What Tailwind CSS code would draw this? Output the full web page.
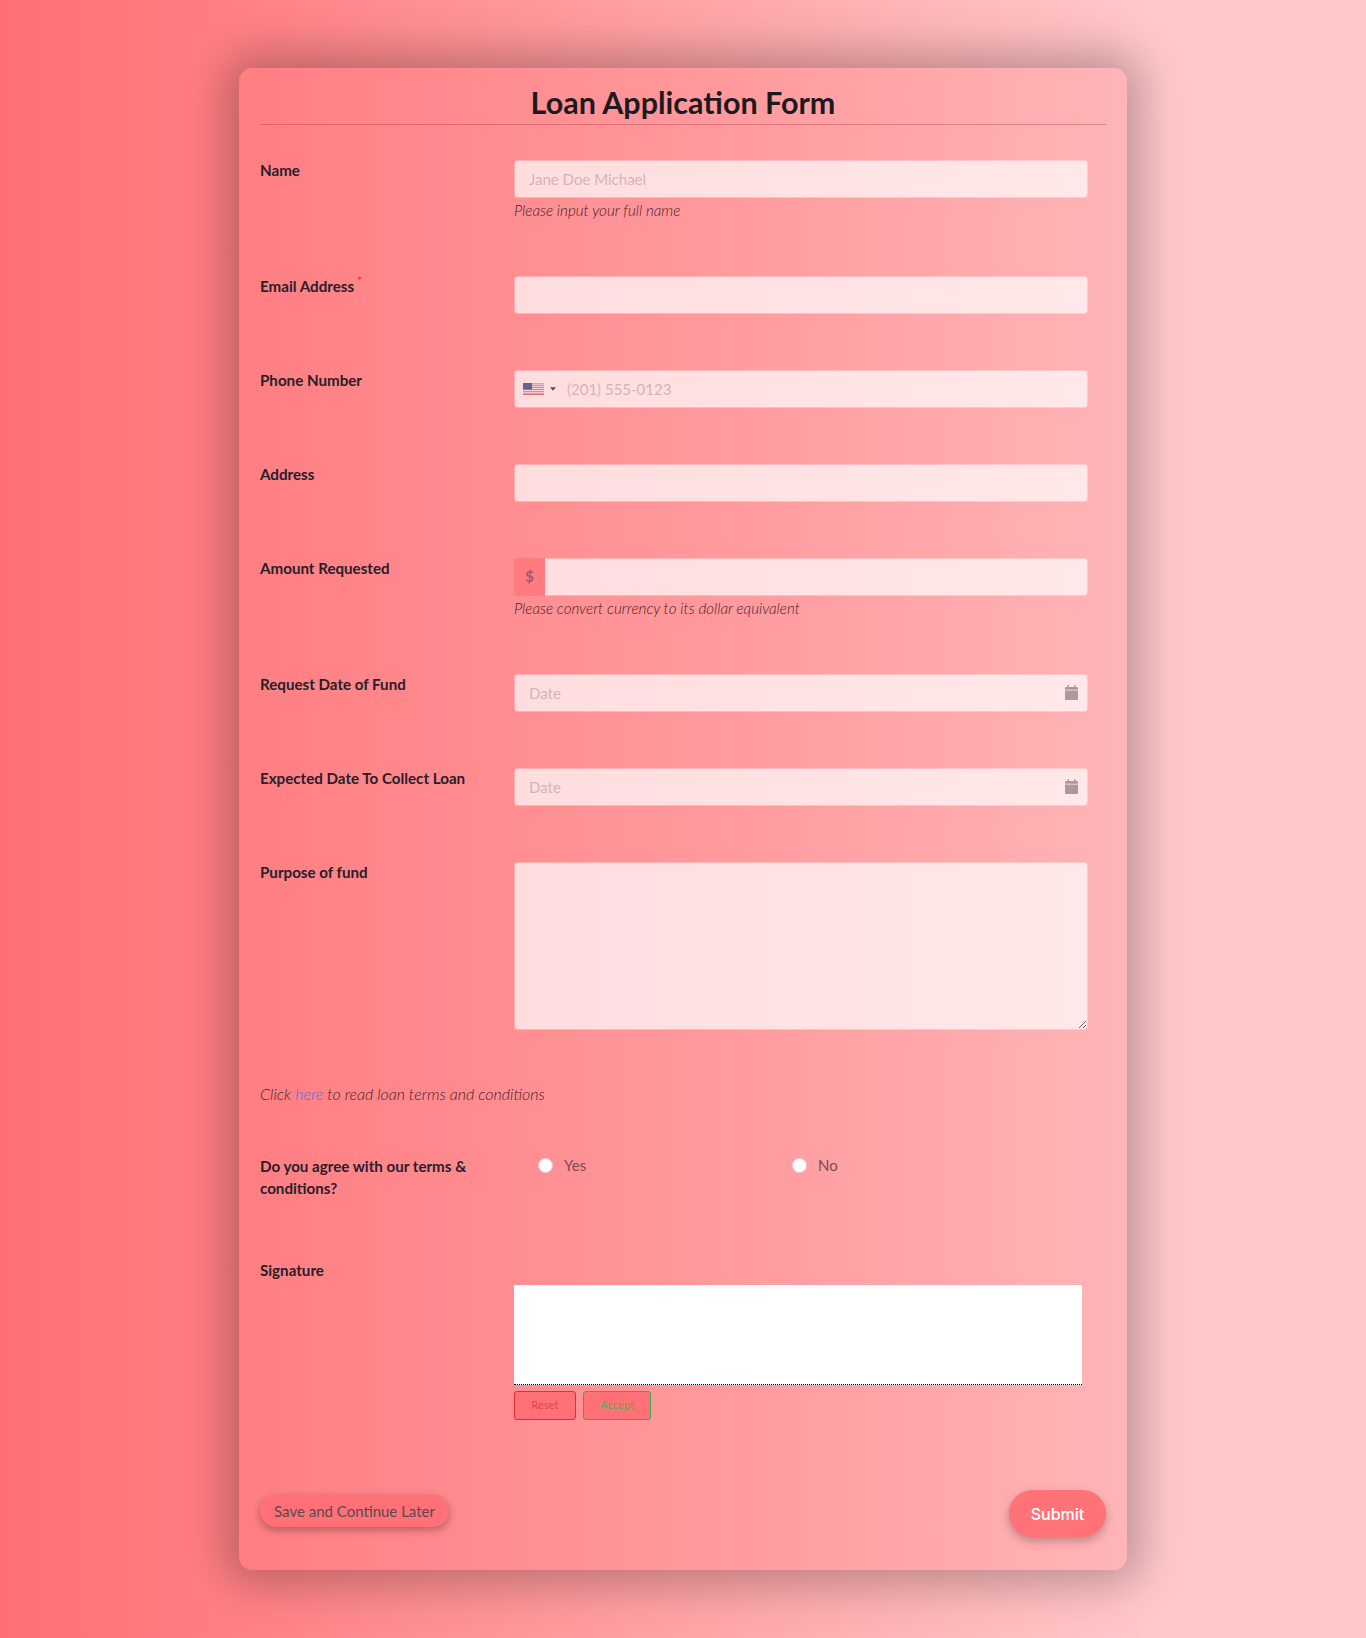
<!DOCTYPE html>
<html lang="en">
<head>
<meta charset="utf-8">
<title>Loan Application Form</title>
<script src="https://cdn.jsdelivr.net/npm/@tailwindcss/browser@4"></script>
</head>
<body class="bg-[linear-gradient(90deg,#ff6e72_0%,#ffc9cb_85%,#ffc9ca_100%)] font-['Lato',sans-serif]">
<div class="flex justify-center pt-[68px] pb-[68px] min-h-[1638px]">
<form class="w-[888px] h-[1502px] rounded-[14px] px-[21px] bg-[linear-gradient(90deg,#ff7e82_0%,#ff9a9e_55%,#ffb5b8_100%)] shadow-[0_0_45px_14px_rgba(0,0,0,0.26)]">
  <div class="h-[57px] border-b border-[#b83a44]/40 flex items-center justify-center">
    <h1 class="text-[30.5px] font-bold text-[#1c1a1f] pt-[12px] leading-[34px]">Loan Application Form</h1>
  </div>

  <div class="flex mt-[35px]">
    <label class="w-[254px] -mt-px text-[15.15px] leading-[22px] font-bold text-[#26202a]">Name</label>
    <div class="w-[574px] mb-[56px]">
      <input class="block w-full h-[38px] rounded-[4px] border border-white/30 bg-white/70 bg-clip-padding px-[14px] text-[15px] placeholder:text-[#d5b3b8]" placeholder="Jane Doe Michael">
      <p class="h-[22px] leading-[25px] text-[15.2px] font-light italic text-[#4a1f28]">Please input your full name</p>
    </div>
  </div>

  <div class="flex">
    <label class="w-[254px] -mt-px text-[15.15px] leading-[22px] font-bold text-[#26202a]">Email Address<sup class="text-[#e5383f] text-[13px] ml-[3px] font-normal">*</sup></label>
    <div class="w-[574px] mb-[56px]">
      <input class="block w-full h-[38px] rounded-[4px] border border-white/30 bg-white/70 bg-clip-padding px-[14px] text-[15px]">
    </div>
  </div>

  <div class="flex">
    <label class="w-[254px] -mt-px text-[15.15px] leading-[22px] font-bold text-[#26202a]">Phone Number</label>
    <div class="w-[574px] mb-[56px] h-[38px] rounded-[4px] border border-white/30 bg-white/70 bg-clip-padding flex items-center pl-[8px]">
      <svg class="w-[21px] h-[12px] shrink-0 opacity-70" viewBox="0 0 21 12">
        <rect width="21" height="12" fill="#fff"/>
        <path d="M0 0.9h21M0 2.75h21M0 4.6h21M0 6.45h21M0 8.3h21M0 10.15h21M0 11.5h21" stroke="#c8343f" stroke-width="0.95"/>
        <rect width="9" height="6.5" fill="#2b2f70"/>
      </svg>
      <svg class="w-[6px] h-[4px] ml-[6px] shrink-0" viewBox="0 0 7 4"><path d="M0 0h7L3.5 4z" fill="#5c4a4e"/></svg>
      <input class="flex-1 h-full ml-[11px] pr-[14px] bg-transparent text-[15px] placeholder:text-[#d5b3b8]" placeholder="(201) 555-0123">
    </div>
  </div>

  <div class="flex">
    <label class="w-[254px] -mt-px text-[15.15px] leading-[22px] font-bold text-[#26202a]">Address</label>
    <div class="w-[574px] mb-[56px]">
      <input class="block w-full h-[38px] rounded-[4px] border border-white/30 bg-white/70 bg-clip-padding px-[14px] text-[15px]">
    </div>
  </div>

  <div class="flex">
    <label class="w-[254px] -mt-px text-[15.15px] leading-[22px] font-bold text-[#26202a]">Amount Requested</label>
    <div class="w-[574px] mb-[56px]">
      <div class="flex h-[38px] rounded-[4px] overflow-hidden">
        <span class="w-[31px] pb-[2px] bg-[#ff7b80] flex items-center justify-center text-[15px] font-bold text-[#a85a62]">$</span>
        <input class="flex-1 border border-white/30 border-l-0 rounded-r-[4px] bg-white/70 bg-clip-padding px-[14px] text-[15px]">
      </div>
      <p class="h-[22px] leading-[25px] text-[15.2px] font-light italic text-[#4a1f28]">Please convert currency to its dollar equivalent</p>
    </div>
  </div>

  <div class="flex">
    <label class="w-[254px] -mt-px text-[15.15px] leading-[22px] font-bold text-[#26202a]">Request Date of Fund</label>
    <div class="w-[574px] mb-[56px] h-[38px] rounded-[4px] border border-white/30 bg-white/70 bg-clip-padding flex items-center pr-[9px]">
      <input class="flex-1 h-full px-[14px] bg-transparent text-[15px] placeholder:text-[#d5b3b8]" placeholder="Date">
      <svg class="w-[13px] h-[15px] -mt-px" viewBox="0 0 13 15" fill="#ad999d"><path d="M2.5 0h1.4v2h5.2V0h1.4v2H12a1 1 0 0 1 1 1v1.8H0V3a1 1 0 0 1 1-1h1.5z"/><path d="M0 5.6h13V14a1 1 0 0 1-1 1H1a1 1 0 0 1-1-1z"/></svg>
    </div>
  </div>

  <div class="flex">
    <label class="w-[254px] -mt-px text-[15.15px] leading-[22px] font-bold text-[#26202a]">Expected Date To Collect Loan</label>
    <div class="w-[574px] mb-[56px] h-[38px] rounded-[4px] border border-white/30 bg-white/70 bg-clip-padding flex items-center pr-[9px]">
      <input class="flex-1 h-full px-[14px] bg-transparent text-[15px] placeholder:text-[#d5b3b8]" placeholder="Date">
      <svg class="w-[13px] h-[15px] -mt-px" viewBox="0 0 13 15" fill="#ad999d"><path d="M2.5 0h1.4v2h5.2V0h1.4v2H12a1 1 0 0 1 1 1v1.8H0V3a1 1 0 0 1 1-1h1.5z"/><path d="M0 5.6h13V14a1 1 0 0 1-1 1H1a1 1 0 0 1-1-1z"/></svg>
    </div>
  </div>

  <div class="flex">
    <label class="w-[254px] -mt-px text-[15.15px] leading-[22px] font-bold text-[#26202a]">Purpose of fund</label>
    <textarea class="block w-[574px] h-[168px] rounded-[4px] border border-white/30 bg-white/70 bg-clip-padding px-[14px] py-[8px] text-[15px]"></textarea>
  </div>

  <p class="mt-[53px] h-[22px] leading-[22px] text-[16px] font-light italic text-[#4a1f28]">Click <a class="text-[#4f70e0]">here</a> to read loan terms and conditions</p>

  <div class="flex mt-[50px]">
    <label class="w-[254px] h-[44px] text-[15.15px] leading-[22px] font-bold text-[#26202a]">Do you agree with our terms &amp; conditions?</label>
    <div class="flex w-[574px] h-[20px] items-center text-[15px] text-[#7d4a52]">
      <div class="w-[254px] flex items-center pl-[24px]">
        <input type="radio" name="agree" class="appearance-none w-[15px] h-[15px] rounded-full bg-white border border-[#f0c8cc]">
        <span class="ml-[11px]">Yes</span>
      </div>
      <div class="flex items-center pl-[24px]">
        <input type="radio" name="agree" class="appearance-none w-[15px] h-[15px] rounded-full bg-white border border-[#f0c8cc]">
        <span class="ml-[11px]">No</span>
      </div>
    </div>
  </div>

  <div class="flex mt-[61px]">
    <label class="w-[254px] -mt-px text-[15.15px] leading-[22px] font-bold text-[#26202a]">Signature</label>
    <div class="pt-[25px]">
      <div class="w-[568px] h-[100px] bg-white border-b border-dotted border-black"></div>
      <div class="flex gap-[7px] mt-[6px]">
        <button type="button" class="w-[62px] h-[29px] rounded-[3px] border border-[#e02e38] bg-[#ff7077] text-[11px] text-[#e0484f]">Reset</button>
        <button type="button" class="w-[68px] h-[29px] rounded-[3px] border border-[#2fb04f] bg-[#ff7077] text-[11px] text-[#4fb050]">Accept</button>
      </div>
    </div>
  </div>

  <div class="flex justify-between items-start mt-[70px]">
    <button type="button" class="w-[189px] h-[32px] mt-[5px] rounded-full bg-[#ff7077] text-[15px] text-[#5a4950] shadow-[0_3px_8px_rgba(0,0,0,0.3)]">Save and Continue Later</button>
    <button type="submit" class="w-[97px] h-[47px] rounded-full bg-[#ff7277] text-[16px] font-medium font-['Inter',sans-serif] text-white shadow-[0_4px_10px_rgba(0,0,0,0.25)]">Submit</button>
  </div>
</form>
</div>
</body>
</html>
